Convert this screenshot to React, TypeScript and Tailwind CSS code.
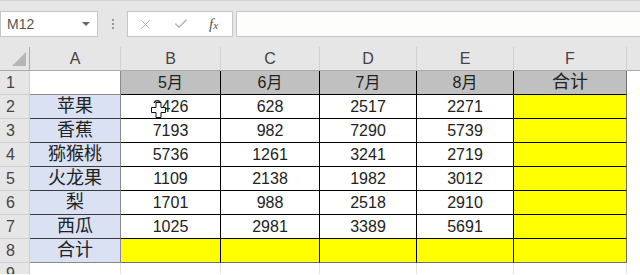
import { Check, X } from "lucide-react";

const cols = ["A", "B", "C", "D", "E", "F"];
const months = ["5月", "6月", "7月", "8月"];

const rows: [string, number[]][] = [
  ["苹果", [2426, 628, 2517, 2271]],
  ["香蕉", [7193, 982, 7290, 5739]],
  ["猕猴桃", [5736, 1261, 3241, 2719]],
  ["火龙果", [1109, 2138, 1982, 3012]],
  ["梨", [1701, 988, 2518, 2910]],
  ["西瓜", [1025, 2981, 3389, 5691]],
];

const font = {
  fontFamily: '"Liberation Sans", Arial, "Noto Sans CJK SC", sans-serif',
};

// fat white cross cursor over B2
const CrossCursor = () => (
  <svg
    width="15"
    height="16"
    viewBox="0 0 15 16"
    className="absolute left-[30px] top-[7px]"
  >
    <path
      d="M5 0.5h5v5h4.5v5H10v5H5v-5H0.5v-5H5z"
      fill="#fff"
      stroke="#111"
      strokeWidth="1"
    />
  </svg>
);

const FormulaBar = () => (
  <div className="flex h-[47px] items-start border-t border-[#d4d4d4] bg-[#e6e6e6] pt-[10px]">
    <div className="flex h-[26px] w-[98px] items-center justify-between border border-[#c6c6c6] bg-white pl-[6px] pr-[7px]">
      <span className="text-[14px] text-[#555]">M12</span>
      <span className="h-0 w-0 border-x-[4px] border-t-[4px] border-x-transparent border-t-[#666]" />
    </div>
    <div className="flex w-[29px] flex-col items-center gap-[2px] pt-[8px]">
      <span className="h-[2px] w-[2px] bg-[#9a9a9a]" />
      <span className="h-[2px] w-[2px] bg-[#9a9a9a]" />
      <span className="h-[2px] w-[2px] bg-[#9a9a9a]" />
    </div>
    <div className="flex h-[26px] w-[106px] items-center border border-[#c6c6c6] bg-white pl-[10px]">
      <X className="h-[15px] w-[15px] text-[#b4b4b4]" strokeWidth={1.6} />
      <Check className="ml-[20px] h-[16px] w-[16px] text-[#b4b4b4]" strokeWidth={2.2} />
      <span
        className="ml-[20px] text-[15px] italic text-[#555]"
        style={{ fontFamily: '"Liberation Serif", serif' }}
      >
        f<span className="text-[11px]">x</span>
      </span>
    </div>
    <div className="ml-[3px] h-[26px] flex-1 border-y border-l border-[#c6c6c6] bg-[#fdfdfb]" />
  </div>
);

export default function App() {
  const cell = "flex h-[24px] items-center justify-center border-b border-r text-[16px] text-[#222]";
  const cjk = "text-[18px]";
  const rowHead = "flex h-[24px] items-center pl-[6px] border-b border-r border-[#d0d0d0] bg-[#e6e6e6] text-[16px] text-[#444]";

  return (
    <div className="h-[275px] w-[640px] overflow-hidden bg-white" style={font}>
      <FormulaBar />
      <div className="grid grid-cols-[30px_91px_100px_99px_97px_97px_113px_1fr]">
        {/* column headers */}
        <div className="flex h-[24px] items-end justify-end border-b border-r border-[#ababab] bg-[#e6e6e6] pb-[4px] pr-[3px]">
          <span className="h-0 w-0 border-b-[14px] border-l-[14px] border-b-[#b6b6b6] border-l-transparent" />
        </div>
        {cols.map((c) => (
          <div
            key={c}
            className="flex h-[24px] items-center justify-center border-b border-r border-b-[#ababab] border-r-[#d2d2d2] bg-[#e6e6e6] text-[16px] text-[#444]"
          >
            {c}
          </div>
        ))}
        <div className="h-[24px] border-b border-[#ababab] bg-[#e6e6e6]" />

        {/* row 1 */}
        <div className={rowHead}>1</div>
        <div className={`${cell} border-[#8a8a8a] bg-white`} />
        {months.map((m) => (
          <div key={m} className={`${cell} border-black bg-[#c0c0c0]`}>
            {m}
          </div>
        ))}
        <div className={`${cell} ${cjk} border-b-black border-r-[#707070] bg-[#c0c0c0]`}>合计</div>
        <div className="h-[24px] bg-white" />

        {/* data rows */}
        {rows.map(([name, vals], i) => (
          <div key={name} className="contents">
            <div className={rowHead}>{i + 2}</div>
            <div className={`${cell} ${cjk} border-b-[#3a3a3a] border-r-[#8a8a8a] bg-[#d9e1f2]`}>{name}</div>
            {vals.map((v, j) => (
              <div key={j} className={`${cell} relative border-black bg-white`}>
                {v}
                {i === 0 && j === 0 && <CrossCursor />}
              </div>
            ))}
            <div className={`${cell} border-b-black border-r-[#707070] bg-[#ffff00]`} />
            <div className="h-[24px] bg-white" />
          </div>
        ))}

        {/* row 8 totals */}
        <div className={rowHead}>8</div>
        <div className={`${cell} ${cjk} border-b-[#8a8a8a] border-r-[#8a8a8a] bg-[#d9e1f2]`}>合计</div>
        {months.map((m) => (
          <div key={m} className={`${cell} border-b-[#707070] border-r-black bg-[#ffff00]`} />
        ))}
        <div className={`${cell} border-[#707070] bg-[#ffff00]`} />
        <div className="h-[24px] bg-white" />

        {/* row 9, cut off at the window's bottom edge */}
        <div className="flex h-[11px] items-start overflow-hidden border-r border-[#d0d0d0] bg-[#e6e6e6] pl-[6px] text-[16px] leading-[22px] text-[#444]">
          9
        </div>
        {cols.map((c) => (
          <div key={c} className="h-[11px] border-r border-[#e2e2e2] bg-white" />
        ))}
        <div className="h-[11px] bg-white" />
      </div>
    </div>
  );
}
